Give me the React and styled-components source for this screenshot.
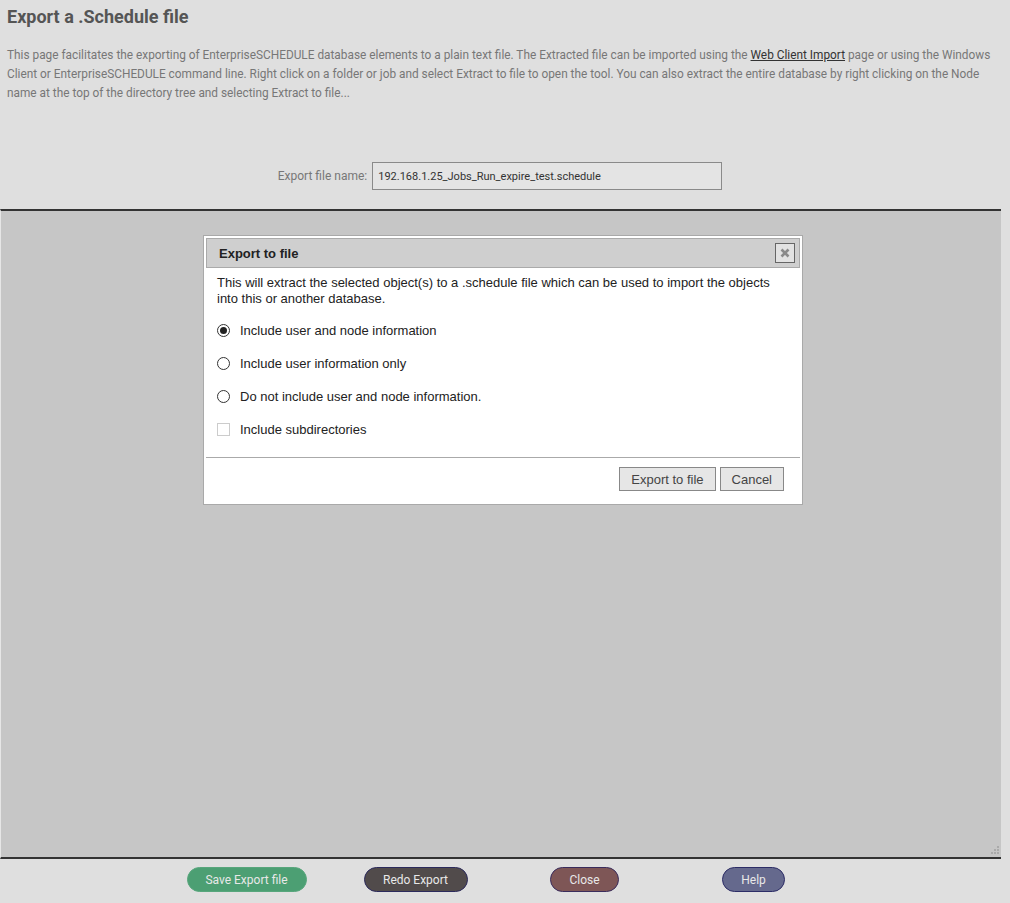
import React, { useState } from 'react'
import styled, { createGlobalStyle } from 'styled-components'

const GlobalStyle = createGlobalStyle`
  html, body {
    margin: 0;
    padding: 0;
    background: #dfdfdf;
  }
  body {
    font-family: Roboto, 'Liberation Sans', Arial, sans-serif;
  }
`

const options = [
  'Include user and node information',
  'Include user information only',
  'Do not include user and node information.',
]

const footerButtons = [
  { label: 'Save Export file', bg: '#4c9f73', border: '#58a67c', width: 120 },
  { label: 'Redo Export', bg: '#514b4b', border: '#2c2a5c', width: 104 },
  { label: 'Close', bg: '#7e5656', border: '#3a2c5c', width: 69 },
  { label: 'Help', bg: '#65698d', border: '#2c2c66', width: 63 },
]

const App = () => {
  const [choice, setChoice] = useState(0)
  const [subdirs, setSubdirs] = useState(false)

  return (
    <Page>
      <GlobalStyle />
      <Header>
        <Title>Export a .Schedule file</Title>
        <Intro>
          This page facilitates the exporting of EnterpriseSCHEDULE database elements to a plain text file. The Extracted file can be imported using the <a href='#'>Web Client Import</a> page or using the Windows
          <br />
          Client or EnterpriseSCHEDULE command line. Right click on a folder or job and select Extract to file to open the tool. You can also extract the entire database by right clicking on the Node
          <br />
          name at the top of the directory tree and selecting Extract to file...
        </Intro>
        <FileRow>
          <label>Export file name:</label>
          <FileInput readOnly value='192.168.1.25_Jobs_Run_expire_test.schedule' />
        </FileRow>
      </Header>

      <Panel>
        <Dialog>
          <DialogHeader>
            <span>Export to file</span>
            <CloseBox aria-label='close'>
              <svg width='10' height='10' viewBox='0 0 10 10'>
                <path d='M1.5 1.5 L8.5 8.5 M8.5 1.5 L1.5 8.5' stroke='#8a8a8a' strokeWidth='2.6' />
              </svg>
            </CloseBox>
          </DialogHeader>
          <DialogBody>
            <p>
              This will extract the selected object(s) to a .schedule file which can be used to import the objects
              <br />
              into this or another database.
            </p>
            {options.map((text, index) => (
              <OptionRow key={index} onClick={() => setChoice(index)}>
                <Radio $checked={choice === index} />
                {text}
              </OptionRow>
            ))}
            <OptionRow onClick={() => setSubdirs(!subdirs)}>
              <Check $checked={subdirs} />
              Include subdirectories
            </OptionRow>
          </DialogBody>
          <DialogFooter>
            <DialogButton>Export to file</DialogButton>
            <DialogButton>Cancel</DialogButton>
          </DialogFooter>
        </Dialog>
        <Grip>
          <svg width='10' height='10' viewBox='0 0 10 10'>
            <rect x='7' y='0' width='2' height='2' fill='#aaa' />
            <rect x='4' y='3' width='2' height='2' fill='#aaa' />
            <rect x='7' y='3' width='2' height='2' fill='#aaa' />
            <rect x='1' y='6' width='2' height='2' fill='#aaa' />
            <rect x='4' y='6' width='2' height='2' fill='#aaa' />
            <rect x='7' y='6' width='2' height='2' fill='#aaa' />
          </svg>
        </Grip>
      </Panel>

      <Footer>
        {footerButtons.map((btn) => (
          <PillButton key={btn.label} $bg={btn.bg} $border={btn.border} $width={btn.width}>
            {btn.label}
          </PillButton>
        ))}
      </Footer>
    </Page>
  )
}

const Page = styled.div`
  height: 903px;
  display: flex;
  flex-direction: column;
  overflow: hidden;
`

const Header = styled.header`
  height: 209px;
  padding: 0 7px;
  box-sizing: border-box;
`

const Title = styled.h1`
  margin: 0;
  padding-top: 6px;
  font-size: 18px;
  line-height: 22px;
  font-weight: 700;
  color: #555;
`

const Intro = styled.p`
  margin: 18px 0 0;
  font-size: 11.85px;
  line-height: 19px;
  color: #777;
  white-space: nowrap;

  a {
    color: #333;
    text-decoration: underline;
  }
`

const FileRow = styled.div`
  display: flex;
  justify-content: center;
  align-items: center;
  gap: 5px;
  margin-top: 59px;
  padding-right: 10px;

  label {
    font-size: 12px;
    color: #777;
  }
`

const FileInput = styled.input`
  width: 350px;
  height: 28px;
  box-sizing: border-box;
  border: 1px solid #8a8a8a;
  background: #e4e4e4;
  padding: 0 5px;
  font-family: Roboto, 'Liberation Sans', Arial, sans-serif;
  font-size: 11px;
  color: #333;
  outline: none;
`

const Panel = styled.main`
  position: relative;
  flex: 1;
  margin-right: 9px;
  background: #c6c6c6;
  border-top: 2px solid #333;
  border-bottom: 2px solid #333;
  border-left: 1px solid #e6e6e6;
  padding: 24px 0 0 4px;
`

const Dialog = styled.section`
  width: 600px;
  margin: 0 auto;
  box-sizing: border-box;
  background: #fff;
  border: 1px solid #a9a9a9;
  padding: 2px;
  font-family: 'Liberation Sans', Arial, sans-serif;
  color: #222;
`

const DialogHeader = styled.div`
  display: flex;
  align-items: center;
  justify-content: space-between;
  height: 30px;
  box-sizing: border-box;
  background: #cfcfcf;
  border: 1px solid #aaa;
  padding: 0 4px 0 12px;

  span {
    font-weight: 700;
    font-size: 13px;
    color: #222;
  }
`

const CloseBox = styled.button`
  width: 20px;
  height: 20px;
  padding: 0;
  display: flex;
  align-items: center;
  justify-content: center;
  background: #e2e2e2;
  border: 1px solid #666;
  cursor: pointer;
`

const DialogBody = styled.div`
  padding: 7px 11px 11px;
  border-bottom: 1px solid #aaa;

  p {
    margin: 0 0 14px;
    font-size: 13px;
    line-height: 16px;
  }
`

const OptionRow = styled.div`
  display: flex;
  align-items: center;
  gap: 10px;
  height: 33px;
  font-size: 13px;
  cursor: default;
  margin-top: -7px;
  margin-bottom: 7px;

  &:last-child {
    margin-bottom: 0;
  }
`

const Radio = styled.span`
  width: 13px;
  height: 13px;
  box-sizing: border-box;
  border-radius: 50%;
  border: 1px solid #333;
  background: #fff;
  display: flex;
  align-items: center;
  justify-content: center;

  &::after {
    content: '';
    width: 7px;
    height: 7px;
    border-radius: 50%;
    background: ${(p) => (p.$checked ? '#222' : 'transparent')};
  }
`

const Check = styled.span`
  width: 13px;
  height: 13px;
  box-sizing: border-box;
  border: 1px solid #ccc;
  background: ${(p) => (p.$checked ? '#555' : '#fff')};
`

const DialogFooter = styled.div`
  display: flex;
  justify-content: flex-end;
  gap: 4px;
  padding: 9px 16px 11px;
`

const DialogButton = styled.button`
  height: 24px;
  padding: 0 11px;
  background: #e6e6e6;
  border: 1px solid #888;
  font-family: 'Liberation Sans', Arial, sans-serif;
  font-size: 13px;
  color: #444;
  cursor: pointer;
`

const Grip = styled.div`
  position: absolute;
  right: 1px;
  bottom: 1px;
  line-height: 0;
`

const Footer = styled.footer`
  height: 44px;
  box-sizing: border-box;
  padding: 8px 10px 0 0;
  display: grid;
  grid-template-columns: repeat(4, 169px);
  justify-content: center;
  justify-items: center;
  align-items: start;
`

const PillButton = styled.button`
  width: ${(p) => p.$width}px;
  height: 25px;
  border-radius: 13px;
  background: ${(p) => p.$bg};
  border: 1px solid ${(p) => p.$border};
  color: #e8e8e8;
  font-family: Roboto, 'Liberation Sans', Arial, sans-serif;
  font-size: 12px;
  cursor: pointer;
`

export default App
